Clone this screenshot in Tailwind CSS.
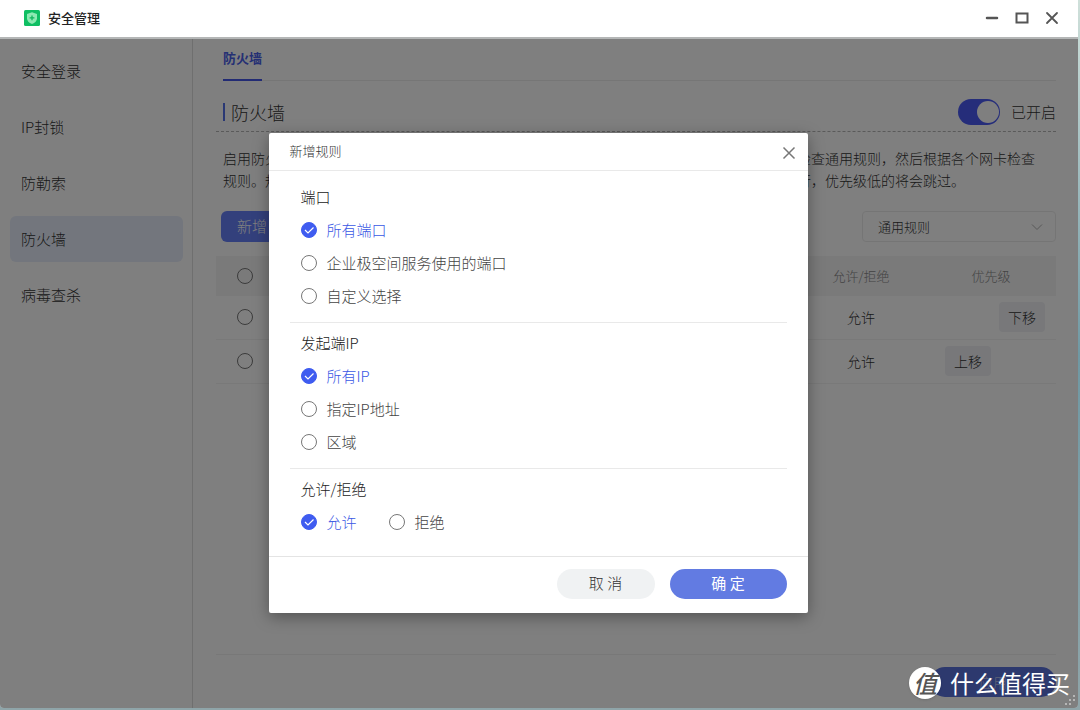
<!DOCTYPE html>
<html lang="zh-CN">
<head>
<meta charset="utf-8">
<meta name="viewport" content="width=device-width, initial-scale=1">
<title>安全管理</title>
<script src="https://cdn.jsdelivr.net/npm/@tailwindcss/browser@4"></script>
</head>
<body class="flex h-screen flex-col overflow-hidden bg-linear-to-b from-[#cfe0da] via-[#6f98a3] to-[#8fa5a9] pr-0.5 pb-0.5 font-['Noto_Sans_CJK_SC',sans-serif] font-light text-[#333]">

<header class="flex h-[39px] shrink-0 items-center border-b-2 border-[#b4b6b6] bg-white pr-[19px] pb-0.5 pl-6">
  <svg class="size-4" viewBox="0 0 16 16" aria-hidden="true">
    <rect width="16" height="16" rx="1.5" fill="#0fbf63"/>
    <path d="M8 2.200 13 4v4.200c0 2.700-1.900 4.600-5 5.700-3.100-1.100-5-3-5-5.700V4z" fill="#8deab2"/>
    <path d="M8 5.400v4.800M5.600 7.800h4.800" stroke="#0fb45c" stroke-width="1.300"/>
  </svg>
  <h1 class="ml-2 text-[13px] font-medium text-[#222]">安全管理</h1>
  <div class="ml-auto flex items-center gap-4 text-[#555]">
    <button type="button" aria-label="最小化"><svg class="block size-3.5" viewBox="0 0 14 14"><path d="M2 7h10" stroke="currentColor" stroke-width="2.500" stroke-linecap="round"/></svg></button>
    <button type="button" aria-label="最大化"><svg class="block size-3.5" viewBox="0 0 14 14"><rect x="1.500" y="2.500" width="11" height="9" fill="none" stroke="currentColor" stroke-width="2"/></svg></button>
    <button type="button" aria-label="关闭"><svg class="block size-3.5" viewBox="0 0 14 14"><path d="M2 2l10 10M12 2 2 12" stroke="currentColor" stroke-width="1.800" stroke-linecap="round"/></svg></button>
  </div>
</header>

<div class="relative flex min-h-0 flex-1 overflow-hidden rounded-b bg-white">
  <nav class="flex w-[193px] shrink-0 flex-col gap-2.5 border-r border-[#dedede] px-[9px] pt-[9px] pl-2.5 text-[15px]">
    <a href="#" class="flex h-[46px] items-center rounded-md pl-[11px]">安全登录</a>
    <a href="#" class="flex h-[46px] items-center rounded-md pl-[11px]">IP封锁</a>
    <a href="#" class="flex h-[46px] items-center rounded-md pl-[11px]">防勒索</a>
    <a href="#" aria-current="page" class="flex h-[46px] items-center rounded-md bg-[#e6edfa] pl-[11px]">防火墙</a>
    <a href="#" class="flex h-[46px] items-center rounded-md pl-[11px]">病毒查杀</a>
  </nav>

  <main class="flex min-w-0 flex-1 flex-col pr-[22px] pl-[23px]">
    <div class="ml-[7px] flex h-[42px] border-b border-[#ececec]">
      <a href="#" class="-mb-px border-b-2 border-[#4456e8] pt-[9px] text-[13px] leading-5 font-bold text-[#4a60e8]">防火墙</a>
    </div>

    <div class="flex h-[51px] items-center border-b border-dashed border-[#b4b4b4] pt-3 pl-[7px]">
      <h2 class="flex items-center text-lg leading-6"><span class="mr-1.5 h-[18px] w-0.5 bg-[#5570e8]"></span>防火墙</h2>
      <label class="ml-auto flex items-center gap-[11px] text-[15px]">
        <span class="relative block h-[26px] w-[42px]">
          <input type="checkbox" role="switch" checked class="peer block h-[26px] w-[42px] appearance-none rounded-full bg-[#bbb] checked:bg-[#4a5af5]">
          <span class="pointer-events-none absolute top-[2px] left-[2px] size-[22px] rounded-full bg-white peer-checked:left-[19px]"></span>
        </span>已开启
      </label>
    </div>

    <p class="mt-[15px] pr-3.5 pl-[7px] text-sm leading-[22px]">启用防火墙后，系统将按照规则对访问设备的网络请求进行过滤，保护数据安全；系统会优先检查通用规则，然后根据各个网卡检查规则。规则按照优先级从高到低依次进行匹配，当某条规则匹配成功后将按照该规则的方式执行，优先级低的将会跳过。</p>

    <div class="mt-5 flex h-[31px] justify-between pl-[5px]">
      <button type="button" class="rounded-md bg-[#6680f8] px-4 text-[15px] text-white">新增</button>
      <div class="relative w-[194px]">
        <select aria-label="规则类型" class="h-[31px] w-full appearance-none rounded border border-[#ebebeb] bg-white pl-[15px] text-[13px]"><option>通用规则</option></select>
        <svg class="pointer-events-none absolute top-[9px] right-3 size-3.5" viewBox="0 0 14 14"><path d="m2 4.500 5 5 5-5" fill="none" stroke="#b0b0b0" stroke-width="1"/></svg>
      </div>
    </div>

    <table class="mt-3.5 w-full table-fixed text-center text-sm">
      <colgroup><col class="w-[58px]"><col><col><col><col class="w-[130px]"><col class="w-[130px]"></colgroup>
      <thead>
        <tr class="h-10 bg-[#f4f4f5] text-[13px] text-[#888]">
          <th><input type="radio" name="rule" aria-label="全部" class="mx-auto block size-4 appearance-none rounded-full border border-[#777]"></th>
          <th class="font-light"></th><th class="font-light"></th><th class="font-light"></th>
          <th class="font-light">允许/拒绝</th><th class="font-light">优先级</th>
        </tr>
      </thead>
      <tbody>
        <tr class="h-[43px] border-b border-[#f2f2f2]">
          <td><input type="radio" name="rule" aria-label="规则一" class="mx-auto block size-4 appearance-none rounded-full border border-[#777]"></td>
          <td></td><td></td><td></td><td>允许</td>
          <td><div class="flex justify-end pr-[11px]"><button type="button" class="h-[30px] w-[46px] rounded bg-[#f0f1f5]">下移</button></div></td>
        </tr>
        <tr class="h-11 border-b border-[#f2f2f2]">
          <td><input type="radio" name="rule" aria-label="规则二" class="mx-auto block size-4 appearance-none rounded-full border border-[#777]"></td>
          <td></td><td></td><td></td><td>允许</td>
          <td><div class="flex pl-[19px]"><button type="button" class="h-[30px] w-[46px] rounded bg-[#f0f1f5]">上移</button></div></td>
        </tr>
      </tbody>
    </table>

    <div class="mt-auto flex h-[54px] items-center justify-end border-t border-[#f0f0f0]">
      <button type="button" class="h-[30px] w-[126px] rounded-full bg-[#5a72dc] text-sm text-white/60">应用</button>
    </div>
  </main>

  <!-- modal layer -->
  <div class="absolute inset-0 flex items-center justify-center bg-black/50 pr-0.5 pb-0.5">
    <form role="dialog" aria-labelledby="dlg" class="w-full max-w-[539px] rounded-xs bg-white text-[15px] shadow-[0_4px_16px_rgba(0,0,0,0.35)]">
      <div class="flex h-[38px] items-center justify-between border-b border-[#e9e9e9] pr-3 pl-[21px]">
        <h2 id="dlg" class="text-[13px]">新增规则</h2>
        <button type="button" aria-label="关闭" class="mt-1 text-[#777]"><svg class="block size-3.5" viewBox="0 0 14 14"><path d="M1.500 1.500l11 11M12.500 1.500l-11 11" stroke="currentColor" stroke-width="1.500"/></svg></button>
      </div>
      <div class="px-[21px] pt-1.5 text-[#444]">
        <fieldset class="border-b border-[#e9e9e9] px-[11px] pt-1 pb-[9px]">
          <legend class="contents"><span class="flex h-[33px] items-center text-[#222]">端口</span></legend>
          <label class="flex h-[33px] items-center gap-2.5 has-checked:text-[#3a58e4]"><span class="relative size-4"><input type="radio" name="port" checked class="peer block size-4 appearance-none rounded-full border border-[#777] checked:border-[#3f5cf0] checked:bg-[#3f5cf0]"><svg class="pointer-events-none absolute inset-0 hidden size-4 peer-checked:block" viewBox="0 0 16 16"><path d="m4 8 3 3 5.500-5.500" fill="none" stroke="#fff" stroke-width="1.200"/></svg></span>所有端口</label>
          <label class="flex h-[33px] items-center gap-2.5"><input type="radio" name="port" class="size-4 appearance-none rounded-full border border-[#777]">企业极空间服务使用的端口</label>
          <label class="flex h-[33px] items-center gap-2.5"><input type="radio" name="port" class="size-4 appearance-none rounded-full border border-[#777]">自定义选择</label>
        </fieldset>
        <fieldset class="border-b border-[#e9e9e9] px-[11px] pt-1 pb-[9px]">
          <legend class="contents"><span class="flex h-[33px] items-center text-[#222]">发起端IP</span></legend>
          <label class="flex h-[33px] items-center gap-2.5 has-checked:text-[#3a58e4]"><span class="relative size-4"><input type="radio" name="ip" checked class="peer block size-4 appearance-none rounded-full border border-[#777] checked:border-[#3f5cf0] checked:bg-[#3f5cf0]"><svg class="pointer-events-none absolute inset-0 hidden size-4 peer-checked:block" viewBox="0 0 16 16"><path d="m4 8 3 3 5.500-5.500" fill="none" stroke="#fff" stroke-width="1.200"/></svg></span>所有IP</label>
          <label class="flex h-[33px] items-center gap-2.5"><input type="radio" name="ip" class="size-4 appearance-none rounded-full border border-[#777]">指定IP地址</label>
          <label class="flex h-[33px] items-center gap-2.5"><input type="radio" name="ip" class="size-4 appearance-none rounded-full border border-[#777]">区域</label>
        </fieldset>
        <fieldset class="px-[11px] pt-1 pb-[17px]">
          <legend class="contents"><span class="flex h-[33px] items-center text-[#222]">允许/拒绝</span></legend>
          <div class="flex gap-8">
            <label class="flex h-[33px] items-center gap-2.5 has-checked:text-[#3a58e4]"><span class="relative size-4"><input type="radio" name="act" checked class="peer block size-4 appearance-none rounded-full border border-[#777] checked:border-[#3f5cf0] checked:bg-[#3f5cf0]"><svg class="pointer-events-none absolute inset-0 hidden size-4 peer-checked:block" viewBox="0 0 16 16"><path d="m4 8 3 3 5.500-5.500" fill="none" stroke="#fff" stroke-width="1.200"/></svg></span>允许</label>
            <label class="flex h-[33px] items-center gap-2.5"><input type="radio" name="act" class="size-4 appearance-none rounded-full border border-[#777]">拒绝</label>
          </div>
        </fieldset>
      </div>
      <div class="flex h-[57px] items-center justify-end gap-[15px] border-t border-[#e4e4e4] pr-[21px] pb-px text-[15px]">
        <button type="button" class="h-[30px] w-[98px] rounded-full bg-[#f0f2f3] pb-0.5">取 消</button>
        <button type="submit" class="h-[30px] w-[117px] rounded-full bg-[#627be2] pb-0.5 font-normal text-white">确 定</button>
      </div>
    </form>
  </div>

  <!-- watermark and resize grip over the window corner -->
  <div class="pointer-events-none absolute right-2 bottom-[9px] flex items-center gap-[9px] text-white">
    <span class="flex size-8 items-center justify-center rounded-full bg-white text-2xl leading-none font-medium text-[#555] italic shadow">值</span>
    <span class="text-2xl leading-8 font-normal">什么值得买</span>
  </div>
  <svg class="pointer-events-none absolute right-0.5 bottom-0.5 size-3" viewBox="0 0 12 12" fill="#c8c8c8"><circle cx="10" cy="2" r="1"/><circle cx="6" cy="6" r="1"/><circle cx="10" cy="6" r="1"/><circle cx="2" cy="10" r="1"/><circle cx="6" cy="10" r="1"/></svg>
</div>
</body>
</html>
